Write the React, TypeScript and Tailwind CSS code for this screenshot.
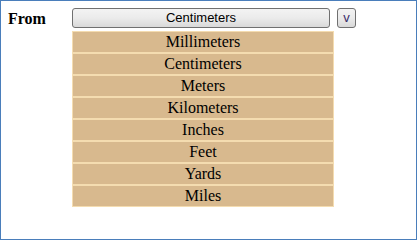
const units = ['Millimeters', 'Centimeters', 'Meters', 'Kilometers', 'Inches', 'Feet', 'Yards', 'Miles'];

export default function App() {
  return (
    <div className="w-[417px] h-[240px] border border-[#4a7ebb] bg-white pl-[7px] pt-[7px] flex font-['Liberation_Serif',serif] text-black">
      <div className="w-[64px] pt-[2px] text-[16px] font-bold leading-[18px]">From</div>
      <div className="flex flex-col">
        <div className="flex items-center gap-[7px]">
          <button className="w-[258px] h-[20px] rounded-[3px] border border-[#707070] bg-gradient-to-b from-[#f3f3f3] via-[#ebebeb] to-[#d9d9d9] font-['Liberation_Sans',Arial,sans-serif] text-[13px] leading-[18px] text-black">
            Centimeters
          </button>
          <button className="w-[19px] h-[20px] rounded-[3px] border border-[#707070] bg-gradient-to-b from-[#f3f3f3] via-[#ebebeb] to-[#d9d9d9] font-['Liberation_Sans',Arial,sans-serif] text-[13px] leading-[16px] text-[#3a2a6a]">
            v
          </button>
        </div>
        <ul className="mt-[3px] w-[262px]">
          {units.map((u) => (
            <li
              key={u}
              className="h-[22px] border border-[#f4dcb0] bg-[#d8b98e] text-center text-[16px] leading-[20px]"
            >
              {u}
            </li>
          ))}
        </ul>
      </div>
    </div>
  );
}
